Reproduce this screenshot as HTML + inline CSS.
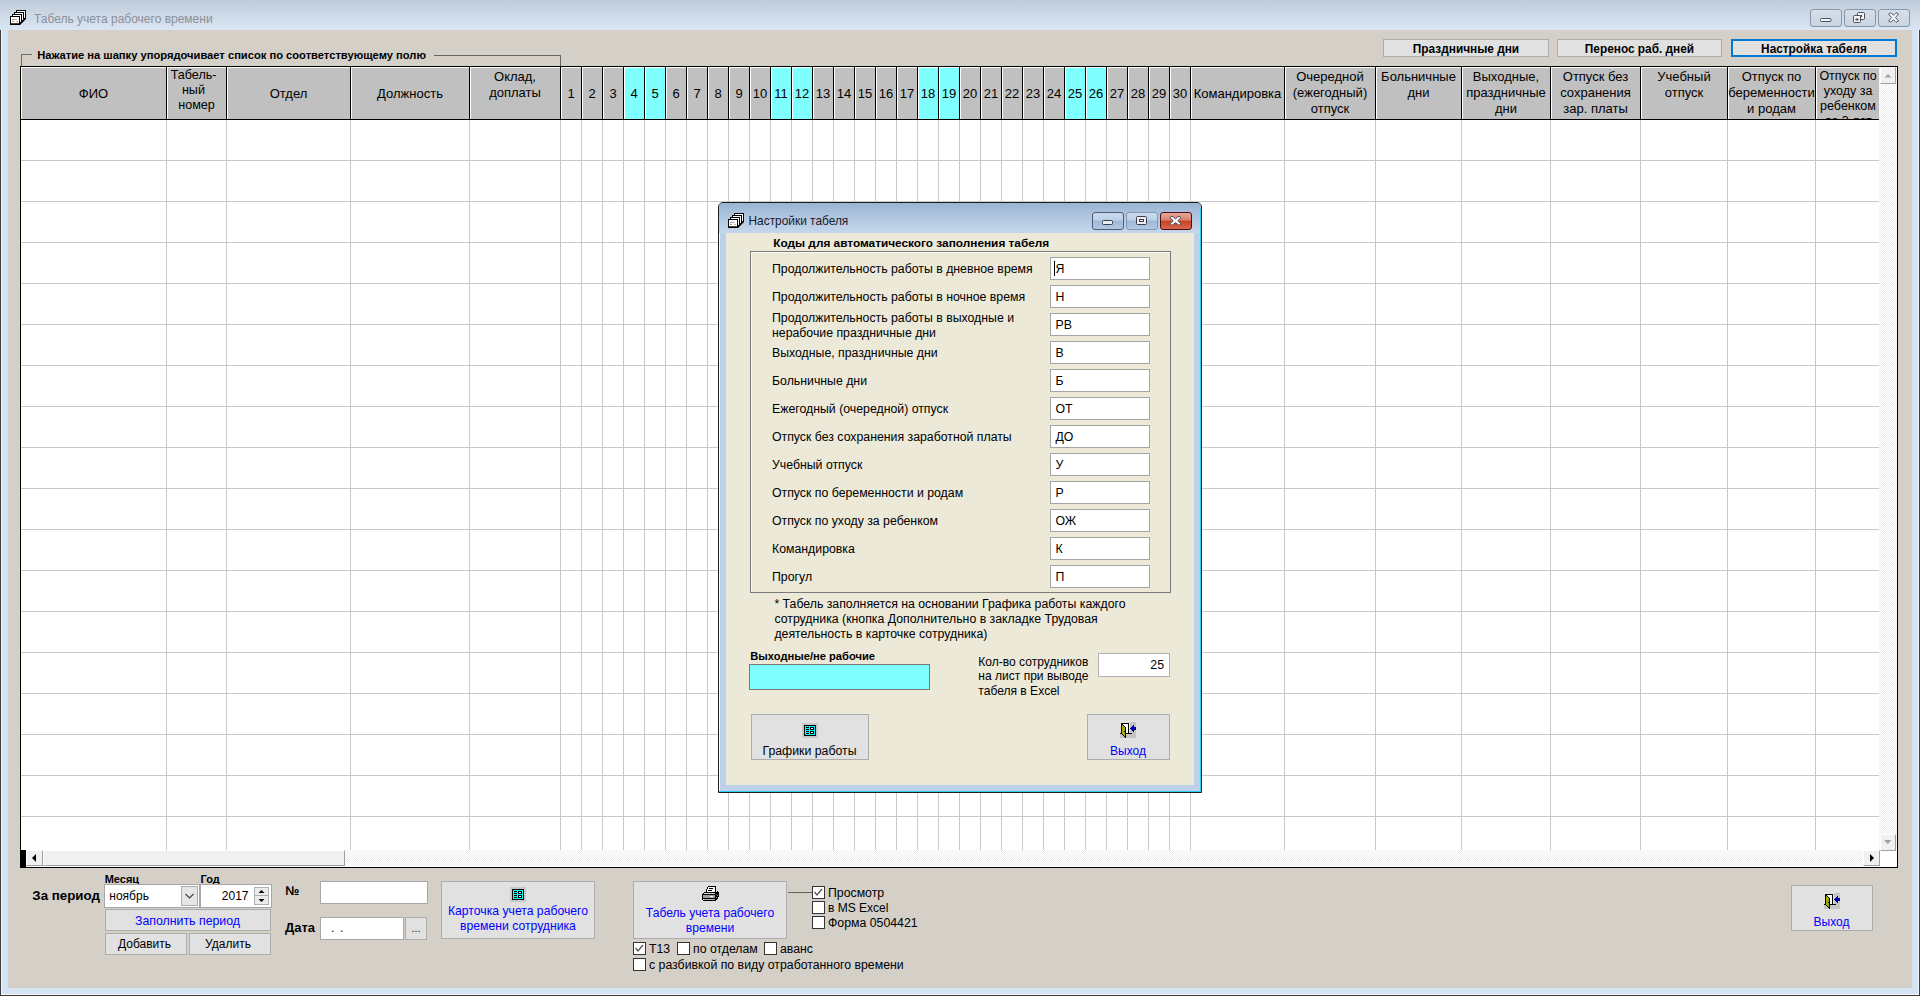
<!DOCTYPE html>
<html><head><meta charset="utf-8">
<style>
*{box-sizing:border-box}
html,body{margin:0;padding:0}
body{width:1920px;height:996px;overflow:hidden;position:relative;font-family:"Liberation Sans",sans-serif;font-size:12px;color:#000;background:#d4e3f2}
.a{position:absolute}
.t{position:absolute;white-space:pre;line-height:1}
</style></head><body>
<div class="a" style="left:0px;top:0px;width:1920px;height:996px;background:#d5e4f2"></div>
<div class="a" style="left:0px;top:30px;width:1920px;height:966px;border:1px solid #3c3c3c;border-top:none"></div>
<div class="a" style="left:1px;top:30px;width:1918px;height:965px;border:1px solid #f4f8fc;border-top:none"></div>
<div class="a" style="left:0px;top:0px;width:1920px;height:30px;background:linear-gradient(#bfcbd9,#dae6f3)"></div>
<div class="a" style="left:8px;top:30px;width:1904px;height:958px;background:#d4d0c8"></div>
<svg class="a" style="left:10px;top:10px" width="17" height="16" viewBox="10 10 17 16"><path d="M16 10h10v9l-6 6H10V16h2v-2h2v-2h2z" fill="#000"/><rect x="16" y="10" width="10" height="9" fill="#000"/><rect x="17" y="11" width="8" height="7" fill="#fff"/><rect x="14" y="12" width="10" height="9" fill="#000"/><rect x="15" y="13" width="8" height="7" fill="#fff"/><rect x="12" y="14" width="10" height="9" fill="#000"/><rect x="13" y="15" width="8" height="7" fill="#fff"/><rect x="10" y="16" width="10" height="9" fill="#000"/><rect x="11" y="17" width="8" height="7" fill="#fff"/><rect x="17" y="11" width="8" height="1" fill="#fff"/><rect x="11" y="17" width="8" height="6" fill="#fff"/><rect x="12" y="19" width="3" height="1" fill="#999"/><rect x="15" y="19" width="2" height="1" fill="#bbb"/><rect x="12" y="21" width="2" height="1" fill="#999"/><rect x="16" y="21" width="2" height="1" fill="#bbb"/><rect x="11" y="23" width="8" height="1" fill="#5a3a1a"/></svg>
<div class="t" style="left:34px;top:12.84px;font-size:12px;color:#8b9099;">Табель учета рабочего времени</div>
<div class="a" style="left:1810px;top:9px;width:32px;height:18px;border:1px solid #8996ab;border-radius:3px;background:linear-gradient(#d6dfea,#c8d4e2)"></div>
<div class="a" style="left:1844px;top:9px;width:32px;height:18px;border:1px solid #8996ab;border-radius:3px;background:linear-gradient(#d6dfea,#c8d4e2)"></div>
<div class="a" style="left:1878px;top:9px;width:32px;height:18px;border:1px solid #8996ab;border-radius:3px;background:linear-gradient(#d6dfea,#c8d4e2)"></div>
<svg class="a" style="left:1810px;top:9px" width="100" height="18" viewBox="0 0 100 18">
<rect x="10.5" y="9.5" width="10.5" height="3" rx="1" fill="#f4f4f4" stroke="#4a5060"/>
<rect x="47.5" y="3.5" width="7" height="7" rx="1" fill="#f4f4f4" stroke="#4a5060"/>
<rect x="50" y="6" width="2" height="2" fill="#4a5060"/>
<rect x="43.5" y="6.5" width="7" height="7" rx="1" fill="#f4f4f4" stroke="#4a5060"/>
<rect x="45.5" y="9.5" width="3" height="2" fill="#4a5060"/>
<path d="M78.5 5l2.5-1.3 2.5 2.6 2.5-2.6 2.5 1.3-3 3.5 3 3.5-2.5 1.3-2.5-2.6-2.5 2.6-2.5-1.3 3-3.5z" fill="#f4f4f4" stroke="#4a5060" stroke-width="0.9"/>
</svg>
<div class="a" style="left:1383px;top:39px;width:166px;height:18px;background:#e1e1e1;border:1px solid #adadad;"></div>
<div class="t" style="left:1266px;width:400px;text-align:center;top:44.17px;font-size:11.85px;font-weight:bold;">Праздничные дни</div>
<div class="a" style="left:1557px;top:39px;width:165px;height:18px;background:#e1e1e1;border:1px solid #adadad;"></div>
<div class="t" style="left:1439.5px;width:400px;text-align:center;top:44.17px;font-size:11.85px;font-weight:bold;">Перенос раб. дней</div>
<div class="a" style="left:1731px;top:39px;width:166px;height:18px;background:#e1e1e1;border:1px solid #0078d7;border-width:2px"></div>
<div class="t" style="left:1614px;width:400px;text-align:center;top:44.17px;font-size:11.85px;font-weight:bold;">Настройка табеля</div>
<div class="a" style="left:21px;top:54px;width:11px;height:1px;background:#6f6f6f"></div>
<div class="a" style="left:21px;top:54px;width:1px;height:12px;background:#6f6f6f"></div>
<div class="a" style="left:434px;top:55px;width:126px;height:1px;background:#666"></div>
<div class="a" style="left:560px;top:55px;width:1px;height:11px;background:#666"></div>
<div class="t" style="left:37.2px;top:50.14px;font-size:11.17px;font-weight:bold;">Нажатие на шапку упорядочивает список по соответствующему полю</div>
<div class="a" style="left:20px;top:66px;width:1878px;height:802px;border:1px solid #000;background:#fff"></div>
<div class="a" style="left:166px;top:120px;width:1px;height:730px;background:#c8c8c8"></div>
<div class="a" style="left:226px;top:120px;width:1px;height:730px;background:#c8c8c8"></div>
<div class="a" style="left:350px;top:120px;width:1px;height:730px;background:#c8c8c8"></div>
<div class="a" style="left:469px;top:120px;width:1px;height:730px;background:#c8c8c8"></div>
<div class="a" style="left:560px;top:120px;width:1px;height:730px;background:#c8c8c8"></div>
<div class="a" style="left:581px;top:120px;width:1px;height:730px;background:#c8c8c8"></div>
<div class="a" style="left:602px;top:120px;width:1px;height:730px;background:#c8c8c8"></div>
<div class="a" style="left:623px;top:120px;width:1px;height:730px;background:#c8c8c8"></div>
<div class="a" style="left:644px;top:120px;width:1px;height:730px;background:#c8c8c8"></div>
<div class="a" style="left:665px;top:120px;width:1px;height:730px;background:#c8c8c8"></div>
<div class="a" style="left:686px;top:120px;width:1px;height:730px;background:#c8c8c8"></div>
<div class="a" style="left:707px;top:120px;width:1px;height:730px;background:#c8c8c8"></div>
<div class="a" style="left:728px;top:120px;width:1px;height:730px;background:#c8c8c8"></div>
<div class="a" style="left:749px;top:120px;width:1px;height:730px;background:#c8c8c8"></div>
<div class="a" style="left:770px;top:120px;width:1px;height:730px;background:#c8c8c8"></div>
<div class="a" style="left:791px;top:120px;width:1px;height:730px;background:#c8c8c8"></div>
<div class="a" style="left:812px;top:120px;width:1px;height:730px;background:#c8c8c8"></div>
<div class="a" style="left:833px;top:120px;width:1px;height:730px;background:#c8c8c8"></div>
<div class="a" style="left:854px;top:120px;width:1px;height:730px;background:#c8c8c8"></div>
<div class="a" style="left:875px;top:120px;width:1px;height:730px;background:#c8c8c8"></div>
<div class="a" style="left:896px;top:120px;width:1px;height:730px;background:#c8c8c8"></div>
<div class="a" style="left:917px;top:120px;width:1px;height:730px;background:#c8c8c8"></div>
<div class="a" style="left:938px;top:120px;width:1px;height:730px;background:#c8c8c8"></div>
<div class="a" style="left:959px;top:120px;width:1px;height:730px;background:#c8c8c8"></div>
<div class="a" style="left:980px;top:120px;width:1px;height:730px;background:#c8c8c8"></div>
<div class="a" style="left:1001px;top:120px;width:1px;height:730px;background:#c8c8c8"></div>
<div class="a" style="left:1022px;top:120px;width:1px;height:730px;background:#c8c8c8"></div>
<div class="a" style="left:1043px;top:120px;width:1px;height:730px;background:#c8c8c8"></div>
<div class="a" style="left:1064px;top:120px;width:1px;height:730px;background:#c8c8c8"></div>
<div class="a" style="left:1085px;top:120px;width:1px;height:730px;background:#c8c8c8"></div>
<div class="a" style="left:1106px;top:120px;width:1px;height:730px;background:#c8c8c8"></div>
<div class="a" style="left:1127px;top:120px;width:1px;height:730px;background:#c8c8c8"></div>
<div class="a" style="left:1148px;top:120px;width:1px;height:730px;background:#c8c8c8"></div>
<div class="a" style="left:1169px;top:120px;width:1px;height:730px;background:#c8c8c8"></div>
<div class="a" style="left:1190px;top:120px;width:1px;height:730px;background:#c8c8c8"></div>
<div class="a" style="left:1284px;top:120px;width:1px;height:730px;background:#c8c8c8"></div>
<div class="a" style="left:1375px;top:120px;width:1px;height:730px;background:#c8c8c8"></div>
<div class="a" style="left:1461px;top:120px;width:1px;height:730px;background:#c8c8c8"></div>
<div class="a" style="left:1550px;top:120px;width:1px;height:730px;background:#c8c8c8"></div>
<div class="a" style="left:1640px;top:120px;width:1px;height:730px;background:#c8c8c8"></div>
<div class="a" style="left:1727px;top:120px;width:1px;height:730px;background:#c8c8c8"></div>
<div class="a" style="left:1815px;top:120px;width:1px;height:730px;background:#c8c8c8"></div>
<div class="a" style="left:21px;top:160px;width:1858px;height:1px;background:#c8c8c8"></div>
<div class="a" style="left:21px;top:201px;width:1858px;height:1px;background:#c8c8c8"></div>
<div class="a" style="left:21px;top:242px;width:1858px;height:1px;background:#c8c8c8"></div>
<div class="a" style="left:21px;top:283px;width:1858px;height:1px;background:#c8c8c8"></div>
<div class="a" style="left:21px;top:324px;width:1858px;height:1px;background:#c8c8c8"></div>
<div class="a" style="left:21px;top:365px;width:1858px;height:1px;background:#c8c8c8"></div>
<div class="a" style="left:21px;top:406px;width:1858px;height:1px;background:#c8c8c8"></div>
<div class="a" style="left:21px;top:447px;width:1858px;height:1px;background:#c8c8c8"></div>
<div class="a" style="left:21px;top:488px;width:1858px;height:1px;background:#c8c8c8"></div>
<div class="a" style="left:21px;top:529px;width:1858px;height:1px;background:#c8c8c8"></div>
<div class="a" style="left:21px;top:570px;width:1858px;height:1px;background:#c8c8c8"></div>
<div class="a" style="left:21px;top:611px;width:1858px;height:1px;background:#c8c8c8"></div>
<div class="a" style="left:21px;top:652px;width:1858px;height:1px;background:#c8c8c8"></div>
<div class="a" style="left:21px;top:693px;width:1858px;height:1px;background:#c8c8c8"></div>
<div class="a" style="left:21px;top:734px;width:1858px;height:1px;background:#c8c8c8"></div>
<div class="a" style="left:21px;top:775px;width:1858px;height:1px;background:#c8c8c8"></div>
<div class="a" style="left:21px;top:816px;width:1858px;height:1px;background:#c8c8c8"></div>
<div class="a" style="left:21px;top:67px;width:145px;height:52px;background:#c0c0c0;border-left:1px solid #fff;border-top:1px solid #fff"></div>
<div class="t" style="left:-106.5px;width:400px;text-align:center;top:86.60px;font-size:13px;">ФИО</div>
<div class="a" style="left:167px;top:67px;width:59px;height:52px;background:#c0c0c0;border-left:1px solid #fff;border-top:1px solid #fff"></div>
<div class="t" style="left:-6.400000000000006px;width:400px;text-align:center;top:69.33px;font-size:12.6px;">Табель-</div>
<div class="t" style="left:-6.599999999999994px;width:400px;text-align:center;top:84.33px;font-size:12.6px;">ный</div>
<div class="t" style="left:-3.5px;width:400px;text-align:center;top:99.33px;font-size:12.6px;">номер</div>
<div class="a" style="left:227px;top:67px;width:123px;height:52px;background:#c0c0c0;border-left:1px solid #fff;border-top:1px solid #fff"></div>
<div class="t" style="left:88.5px;width:400px;text-align:center;top:86.60px;font-size:13px;">Отдел</div>
<div class="a" style="left:351px;top:67px;width:118px;height:52px;background:#c0c0c0;border-left:1px solid #fff;border-top:1px solid #fff"></div>
<div class="t" style="left:210.0px;width:400px;text-align:center;top:86.60px;font-size:13px;">Должность</div>
<div class="a" style="left:470px;top:67px;width:90px;height:52px;background:#c0c0c0;border-left:1px solid #fff;border-top:1px solid #fff"></div>
<div class="t" style="left:315.0px;width:400px;text-align:center;top:69.60px;font-size:13px;">Оклад,</div>
<div class="t" style="left:315.0px;width:400px;text-align:center;top:85.60px;font-size:13px;">доплаты</div>
<div class="a" style="left:561px;top:67px;width:20px;height:52px;background:#c0c0c0;border-left:1px solid #fff;border-top:1px solid #fff"></div>
<div class="t" style="left:371.0px;width:400px;text-align:center;top:86.60px;font-size:13px;">1</div>
<div class="a" style="left:582px;top:67px;width:20px;height:52px;background:#c0c0c0;border-left:1px solid #fff;border-top:1px solid #fff"></div>
<div class="t" style="left:392.0px;width:400px;text-align:center;top:86.60px;font-size:13px;">2</div>
<div class="a" style="left:603px;top:67px;width:20px;height:52px;background:#c0c0c0;border-left:1px solid #fff;border-top:1px solid #fff"></div>
<div class="t" style="left:413.0px;width:400px;text-align:center;top:86.60px;font-size:13px;">3</div>
<div class="a" style="left:624px;top:67px;width:20px;height:52px;background:#80ffff;border-left:1px solid #fff;border-top:1px solid #fff"></div>
<div class="t" style="left:434.0px;width:400px;text-align:center;top:86.60px;font-size:13px;">4</div>
<div class="a" style="left:645px;top:67px;width:20px;height:52px;background:#80ffff;border-left:1px solid #fff;border-top:1px solid #fff"></div>
<div class="t" style="left:455.0px;width:400px;text-align:center;top:86.60px;font-size:13px;">5</div>
<div class="a" style="left:666px;top:67px;width:20px;height:52px;background:#c0c0c0;border-left:1px solid #fff;border-top:1px solid #fff"></div>
<div class="t" style="left:476.0px;width:400px;text-align:center;top:86.60px;font-size:13px;">6</div>
<div class="a" style="left:687px;top:67px;width:20px;height:52px;background:#c0c0c0;border-left:1px solid #fff;border-top:1px solid #fff"></div>
<div class="t" style="left:497.0px;width:400px;text-align:center;top:86.60px;font-size:13px;">7</div>
<div class="a" style="left:708px;top:67px;width:20px;height:52px;background:#c0c0c0;border-left:1px solid #fff;border-top:1px solid #fff"></div>
<div class="t" style="left:518.0px;width:400px;text-align:center;top:86.60px;font-size:13px;">8</div>
<div class="a" style="left:729px;top:67px;width:20px;height:52px;background:#c0c0c0;border-left:1px solid #fff;border-top:1px solid #fff"></div>
<div class="t" style="left:539.0px;width:400px;text-align:center;top:86.60px;font-size:13px;">9</div>
<div class="a" style="left:750px;top:67px;width:20px;height:52px;background:#c0c0c0;border-left:1px solid #fff;border-top:1px solid #fff"></div>
<div class="t" style="left:560.0px;width:400px;text-align:center;top:86.60px;font-size:13px;">10</div>
<div class="a" style="left:771px;top:67px;width:20px;height:52px;background:#80ffff;border-left:1px solid #fff;border-top:1px solid #fff"></div>
<div class="t" style="left:581.0px;width:400px;text-align:center;top:86.60px;font-size:13px;">11</div>
<div class="a" style="left:792px;top:67px;width:20px;height:52px;background:#80ffff;border-left:1px solid #fff;border-top:1px solid #fff"></div>
<div class="t" style="left:602.0px;width:400px;text-align:center;top:86.60px;font-size:13px;">12</div>
<div class="a" style="left:813px;top:67px;width:20px;height:52px;background:#c0c0c0;border-left:1px solid #fff;border-top:1px solid #fff"></div>
<div class="t" style="left:623.0px;width:400px;text-align:center;top:86.60px;font-size:13px;">13</div>
<div class="a" style="left:834px;top:67px;width:20px;height:52px;background:#c0c0c0;border-left:1px solid #fff;border-top:1px solid #fff"></div>
<div class="t" style="left:644.0px;width:400px;text-align:center;top:86.60px;font-size:13px;">14</div>
<div class="a" style="left:855px;top:67px;width:20px;height:52px;background:#c0c0c0;border-left:1px solid #fff;border-top:1px solid #fff"></div>
<div class="t" style="left:665.0px;width:400px;text-align:center;top:86.60px;font-size:13px;">15</div>
<div class="a" style="left:876px;top:67px;width:20px;height:52px;background:#c0c0c0;border-left:1px solid #fff;border-top:1px solid #fff"></div>
<div class="t" style="left:686.0px;width:400px;text-align:center;top:86.60px;font-size:13px;">16</div>
<div class="a" style="left:897px;top:67px;width:20px;height:52px;background:#c0c0c0;border-left:1px solid #fff;border-top:1px solid #fff"></div>
<div class="t" style="left:707.0px;width:400px;text-align:center;top:86.60px;font-size:13px;">17</div>
<div class="a" style="left:918px;top:67px;width:20px;height:52px;background:#80ffff;border-left:1px solid #fff;border-top:1px solid #fff"></div>
<div class="t" style="left:728.0px;width:400px;text-align:center;top:86.60px;font-size:13px;">18</div>
<div class="a" style="left:939px;top:67px;width:20px;height:52px;background:#80ffff;border-left:1px solid #fff;border-top:1px solid #fff"></div>
<div class="t" style="left:749.0px;width:400px;text-align:center;top:86.60px;font-size:13px;">19</div>
<div class="a" style="left:960px;top:67px;width:20px;height:52px;background:#c0c0c0;border-left:1px solid #fff;border-top:1px solid #fff"></div>
<div class="t" style="left:770.0px;width:400px;text-align:center;top:86.60px;font-size:13px;">20</div>
<div class="a" style="left:981px;top:67px;width:20px;height:52px;background:#c0c0c0;border-left:1px solid #fff;border-top:1px solid #fff"></div>
<div class="t" style="left:791.0px;width:400px;text-align:center;top:86.60px;font-size:13px;">21</div>
<div class="a" style="left:1002px;top:67px;width:20px;height:52px;background:#c0c0c0;border-left:1px solid #fff;border-top:1px solid #fff"></div>
<div class="t" style="left:812.0px;width:400px;text-align:center;top:86.60px;font-size:13px;">22</div>
<div class="a" style="left:1023px;top:67px;width:20px;height:52px;background:#c0c0c0;border-left:1px solid #fff;border-top:1px solid #fff"></div>
<div class="t" style="left:833.0px;width:400px;text-align:center;top:86.60px;font-size:13px;">23</div>
<div class="a" style="left:1044px;top:67px;width:20px;height:52px;background:#c0c0c0;border-left:1px solid #fff;border-top:1px solid #fff"></div>
<div class="t" style="left:854.0px;width:400px;text-align:center;top:86.60px;font-size:13px;">24</div>
<div class="a" style="left:1065px;top:67px;width:20px;height:52px;background:#80ffff;border-left:1px solid #fff;border-top:1px solid #fff"></div>
<div class="t" style="left:875.0px;width:400px;text-align:center;top:86.60px;font-size:13px;">25</div>
<div class="a" style="left:1086px;top:67px;width:20px;height:52px;background:#80ffff;border-left:1px solid #fff;border-top:1px solid #fff"></div>
<div class="t" style="left:896.0px;width:400px;text-align:center;top:86.60px;font-size:13px;">26</div>
<div class="a" style="left:1107px;top:67px;width:20px;height:52px;background:#c0c0c0;border-left:1px solid #fff;border-top:1px solid #fff"></div>
<div class="t" style="left:917.0px;width:400px;text-align:center;top:86.60px;font-size:13px;">27</div>
<div class="a" style="left:1128px;top:67px;width:20px;height:52px;background:#c0c0c0;border-left:1px solid #fff;border-top:1px solid #fff"></div>
<div class="t" style="left:938.0px;width:400px;text-align:center;top:86.60px;font-size:13px;">28</div>
<div class="a" style="left:1149px;top:67px;width:20px;height:52px;background:#c0c0c0;border-left:1px solid #fff;border-top:1px solid #fff"></div>
<div class="t" style="left:959.0px;width:400px;text-align:center;top:86.60px;font-size:13px;">29</div>
<div class="a" style="left:1170px;top:67px;width:20px;height:52px;background:#c0c0c0;border-left:1px solid #fff;border-top:1px solid #fff"></div>
<div class="t" style="left:980.0px;width:400px;text-align:center;top:86.60px;font-size:13px;">30</div>
<div class="a" style="left:1191px;top:67px;width:93px;height:52px;background:#c0c0c0;border-left:1px solid #fff;border-top:1px solid #fff"></div>
<div class="t" style="left:1037.5px;width:400px;text-align:center;top:86.60px;font-size:13px;">Командировка</div>
<div class="a" style="left:1285px;top:67px;width:90px;height:52px;background:#c0c0c0;border-left:1px solid #fff;border-top:1px solid #fff"></div>
<div class="t" style="left:1130.0px;width:400px;text-align:center;top:69.60px;font-size:13px;">Очередной</div>
<div class="t" style="left:1130.0px;width:400px;text-align:center;top:85.60px;font-size:13px;">(ежегодный)</div>
<div class="t" style="left:1130.0px;width:400px;text-align:center;top:101.60px;font-size:13px;">отпуск</div>
<div class="a" style="left:1376px;top:67px;width:85px;height:52px;background:#c0c0c0;border-left:1px solid #fff;border-top:1px solid #fff"></div>
<div class="t" style="left:1218.5px;width:400px;text-align:center;top:69.60px;font-size:13px;">Больничные</div>
<div class="t" style="left:1218.5px;width:400px;text-align:center;top:85.60px;font-size:13px;">дни</div>
<div class="a" style="left:1462px;top:67px;width:88px;height:52px;background:#c0c0c0;border-left:1px solid #fff;border-top:1px solid #fff"></div>
<div class="t" style="left:1306.0px;width:400px;text-align:center;top:69.60px;font-size:13px;">Выходные,</div>
<div class="t" style="left:1306.0px;width:400px;text-align:center;top:85.60px;font-size:13px;">праздничные</div>
<div class="t" style="left:1306.0px;width:400px;text-align:center;top:101.60px;font-size:13px;">дни</div>
<div class="a" style="left:1551px;top:67px;width:89px;height:52px;background:#c0c0c0;border-left:1px solid #fff;border-top:1px solid #fff"></div>
<div class="t" style="left:1395.5px;width:400px;text-align:center;top:69.60px;font-size:13px;">Отпуск без</div>
<div class="t" style="left:1395.5px;width:400px;text-align:center;top:85.60px;font-size:13px;">сохранения</div>
<div class="t" style="left:1395.5px;width:400px;text-align:center;top:101.60px;font-size:13px;">зар. платы</div>
<div class="a" style="left:1641px;top:67px;width:86px;height:52px;background:#c0c0c0;border-left:1px solid #fff;border-top:1px solid #fff"></div>
<div class="t" style="left:1484.0px;width:400px;text-align:center;top:69.60px;font-size:13px;">Учебный</div>
<div class="t" style="left:1484.0px;width:400px;text-align:center;top:85.60px;font-size:13px;">отпуск</div>
<div class="a" style="left:1728px;top:67px;width:87px;height:52px;background:#c0c0c0;border-left:1px solid #fff;border-top:1px solid #fff"></div>
<div class="t" style="left:1571.5px;width:400px;text-align:center;top:69.60px;font-size:13px;">Отпуск по</div>
<div class="t" style="left:1571.5px;width:400px;text-align:center;top:85.60px;font-size:13px;">беременности</div>
<div class="t" style="left:1571.5px;width:400px;text-align:center;top:101.60px;font-size:13px;">и родам</div>
<div class="a" style="left:1816px;top:67px;width:63px;height:52px;overflow:hidden;background:#c0c0c0;border-left:1px solid #fff;border-top:1px solid #fff">
<div class="t" style="left:-200px;width:462px;text-align:center;top:2.42px;font-size:12.5px">Отпуск по</div>
<div class="t" style="left:-200px;width:462px;text-align:center;top:17.42px;font-size:12.5px">уходу за</div>
<div class="t" style="left:-200px;width:462px;text-align:center;top:32.42px;font-size:12.5px">ребенком</div>
<div class="t" style="left:-200px;width:462px;text-align:center;top:47.42px;font-size:12.5px">до 3 лет</div>
</div>
<div class="a" style="left:166px;top:67px;width:1px;height:52px;background:#000"></div>
<div class="a" style="left:226px;top:67px;width:1px;height:52px;background:#000"></div>
<div class="a" style="left:350px;top:67px;width:1px;height:52px;background:#000"></div>
<div class="a" style="left:469px;top:67px;width:1px;height:52px;background:#000"></div>
<div class="a" style="left:560px;top:67px;width:1px;height:52px;background:#000"></div>
<div class="a" style="left:581px;top:67px;width:1px;height:52px;background:#000"></div>
<div class="a" style="left:602px;top:67px;width:1px;height:52px;background:#000"></div>
<div class="a" style="left:623px;top:67px;width:1px;height:52px;background:#000"></div>
<div class="a" style="left:644px;top:67px;width:1px;height:52px;background:#000"></div>
<div class="a" style="left:665px;top:67px;width:1px;height:52px;background:#000"></div>
<div class="a" style="left:686px;top:67px;width:1px;height:52px;background:#000"></div>
<div class="a" style="left:707px;top:67px;width:1px;height:52px;background:#000"></div>
<div class="a" style="left:728px;top:67px;width:1px;height:52px;background:#000"></div>
<div class="a" style="left:749px;top:67px;width:1px;height:52px;background:#000"></div>
<div class="a" style="left:770px;top:67px;width:1px;height:52px;background:#000"></div>
<div class="a" style="left:791px;top:67px;width:1px;height:52px;background:#000"></div>
<div class="a" style="left:812px;top:67px;width:1px;height:52px;background:#000"></div>
<div class="a" style="left:833px;top:67px;width:1px;height:52px;background:#000"></div>
<div class="a" style="left:854px;top:67px;width:1px;height:52px;background:#000"></div>
<div class="a" style="left:875px;top:67px;width:1px;height:52px;background:#000"></div>
<div class="a" style="left:896px;top:67px;width:1px;height:52px;background:#000"></div>
<div class="a" style="left:917px;top:67px;width:1px;height:52px;background:#000"></div>
<div class="a" style="left:938px;top:67px;width:1px;height:52px;background:#000"></div>
<div class="a" style="left:959px;top:67px;width:1px;height:52px;background:#000"></div>
<div class="a" style="left:980px;top:67px;width:1px;height:52px;background:#000"></div>
<div class="a" style="left:1001px;top:67px;width:1px;height:52px;background:#000"></div>
<div class="a" style="left:1022px;top:67px;width:1px;height:52px;background:#000"></div>
<div class="a" style="left:1043px;top:67px;width:1px;height:52px;background:#000"></div>
<div class="a" style="left:1064px;top:67px;width:1px;height:52px;background:#000"></div>
<div class="a" style="left:1085px;top:67px;width:1px;height:52px;background:#000"></div>
<div class="a" style="left:1106px;top:67px;width:1px;height:52px;background:#000"></div>
<div class="a" style="left:1127px;top:67px;width:1px;height:52px;background:#000"></div>
<div class="a" style="left:1148px;top:67px;width:1px;height:52px;background:#000"></div>
<div class="a" style="left:1169px;top:67px;width:1px;height:52px;background:#000"></div>
<div class="a" style="left:1190px;top:67px;width:1px;height:52px;background:#000"></div>
<div class="a" style="left:1284px;top:67px;width:1px;height:52px;background:#000"></div>
<div class="a" style="left:1375px;top:67px;width:1px;height:52px;background:#000"></div>
<div class="a" style="left:1461px;top:67px;width:1px;height:52px;background:#000"></div>
<div class="a" style="left:1550px;top:67px;width:1px;height:52px;background:#000"></div>
<div class="a" style="left:1640px;top:67px;width:1px;height:52px;background:#000"></div>
<div class="a" style="left:1727px;top:67px;width:1px;height:52px;background:#000"></div>
<div class="a" style="left:1815px;top:67px;width:1px;height:52px;background:#000"></div>
<div class="a" style="left:1879px;top:67px;width:1px;height:53px;background:#000"></div>
<div class="a" style="left:21px;top:119px;width:1859px;height:1px;background:#000"></div>
<div class="a" style="left:1879px;top:67px;width:18px;height:783px;background-color:#fff;background-image:repeating-conic-gradient(#efefef 0 25%,#fff 0 50%);background-size:2px 2px"></div>
<div class="a" style="left:1880px;top:67px;width:16px;height:17px;background:#f0f0f0;border-right:1px solid #a0a0a0;border-bottom:1px solid #a0a0a0;border-left:1px solid #fff;border-top:1px solid #fff"></div>
<svg class="a" style="left:1880px;top:67px" width="16" height="17"><path d="M4.5 10.5h7l-3.5-3.5z" fill="#a0a0a0"/></svg>
<div class="a" style="left:1880px;top:834px;width:16px;height:17px;background:#f0f0f0;border-right:1px solid #a0a0a0;border-bottom:1px solid #a0a0a0;border-left:1px solid #fff;border-top:1px solid #fff"></div>
<svg class="a" style="left:1880px;top:834px" width="16" height="17"><path d="M4 6h7.5l-3.75 4z" fill="#a0a0a0"/></svg>
<div class="a" style="left:21px;top:850px;width:1858px;height:16px;background-color:#fff;background-image:repeating-conic-gradient(#efefef 0 25%,#fff 0 50%);background-size:2px 2px"></div>
<div class="a" style="left:21px;top:850px;width:5px;height:17px;background:#000"></div>
<div class="a" style="left:26px;top:850px;width:17px;height:16px;background:#f0f0f0;border-right:1px solid #a0a0a0;border-bottom:1px solid #a0a0a0;border-left:1px solid #fff;border-top:1px solid #fff"></div>
<svg class="a" style="left:26px;top:850px" width="17" height="16"><path d="M10 4v8l-4-4z" fill="#000"/></svg>
<div class="a" style="left:43px;top:850px;width:302px;height:16px;background:#f0f0f0;border-right:1px solid #a0a0a0;border-bottom:1px solid #a0a0a0;border-left:1px solid #fff;border-top:1px solid #fff"></div>
<div class="a" style="left:1863px;top:850px;width:17px;height:16px;background:#f0f0f0;border-right:1px solid #a0a0a0;border-bottom:1px solid #a0a0a0;border-left:1px solid #fff;border-top:1px solid #fff"></div>
<svg class="a" style="left:1863px;top:850px" width="17" height="16"><path d="M7 4v8l4-4z" fill="#000"/></svg>
<div class="a" style="left:1880px;top:851px;width:17px;height:15px;background:#fff"></div>
<div class="t" style="left:32.3px;top:889.24px;font-size:13.3px;font-weight:bold;">За период</div>
<div class="t" style="left:104.7px;top:873.69px;font-size:11px;font-weight:bold;">Месяц</div>
<div class="t" style="left:200.6px;top:873.69px;font-size:11px;font-weight:bold;">Год</div>
<div class="a" style="left:104px;top:884px;width:96px;height:24px;background:#fff;border:1px solid #a8a8a8"></div>
<div class="a" style="left:181px;top:886px;width:17px;height:20px;background:#e6e6e6;border:1px solid #acacac"></div>
<svg class="a" style="left:181px;top:886px" width="17" height="20"><path d="M4.5 8l4 4 4-4" fill="none" stroke="#444" stroke-width="1.2"/></svg>
<div class="t" style="left:109.3px;top:889.84px;font-size:12px;">ноябрь</div>
<div class="a" style="left:200px;top:884px;width:72px;height:24px;background:#fff;border:1px solid #a8a8a8"></div>
<div class="t" style="left:-151.5px;width:400px;text-align:right;top:889.84px;font-size:12px;">2017</div>
<div class="a" style="left:254px;top:887px;width:15px;height:9px;background:#ececec;border:1px solid #b0b0b0"></div>
<div class="a" style="left:254px;top:895px;width:15px;height:10px;background:#ececec;border:1px solid #b0b0b0"></div>
<svg class="a" style="left:254px;top:887px" width="15" height="18"><path d="M4.5 6h6l-3-3z M4.5 12h6l-3 3z" fill="#000"/></svg>
<div class="a" style="left:105px;top:909px;width:166px;height:22px;background:#e1e1e1;border:1px solid #adadad;"></div>
<div class="t" style="left:-12.5px;width:400px;text-align:center;top:914.65px;font-size:12.35px;color:#0000ff;">Заполнить период</div>
<div class="a" style="left:105px;top:933px;width:82px;height:22px;background:#e1e1e1;border:1px solid #adadad;"></div>
<div class="t" style="left:-55.5px;width:400px;text-align:center;top:938.24px;font-size:12px;">Добавить</div>
<div class="a" style="left:189px;top:933px;width:82px;height:22px;background:#e1e1e1;border:1px solid #adadad;"></div>
<div class="t" style="left:28px;width:400px;text-align:center;top:938.24px;font-size:12px;">Удалить</div>
<div class="t" style="left:285.3px;top:885.33px;font-size:12.6px;font-weight:bold;">№</div>
<div class="a" style="left:320px;top:881px;width:108px;height:23px;background:#fff;border:1px solid #a8a8a8"></div>
<div class="t" style="left:285px;top:920.60px;font-size:13px;font-weight:bold;">Дата</div>
<div class="a" style="left:320px;top:917px;width:84px;height:23px;background:#fff;border:1px solid #a8a8a8"></div>
<div class="t" style="left:331px;top:921.84px;font-size:12px;">.</div>
<div class="t" style="left:340px;top:921.84px;font-size:12px;">.</div>
<div class="a" style="left:405px;top:917px;width:22px;height:23px;background:#e1e1e1;border:1px solid #adadad;"></div>
<div class="t" style="left:216px;width:400px;text-align:center;top:923.11px;font-size:10.5px;">...</div>
<div class="a" style="left:441px;top:881px;width:154px;height:58px;background:#e1e1e1;border:1px solid #adadad;"></div>
<svg class="a" style="left:510px;top:887px" width="16" height="15" viewBox="0 0 16 15">
<rect x="0" y="0" width="16" height="15" fill="#c8c8c8"/>
<rect x="2" y="2" width="12" height="11" fill="#000"/>
<rect x="3" y="3" width="10" height="9" fill="#00ffff"/>
<path d="M4 4.5h3M4 6.5h3M4 8.5h3M4 10.5h3" stroke="#000" stroke-width="1"/>
<rect x="8" y="4" width="4" height="3" fill="#000"/><rect x="9" y="5" width="2" height="1" fill="#fff"/>
<rect x="8" y="8" width="4" height="3" fill="#000"/><rect x="9" y="9" width="2" height="1" fill="#fff"/>
</svg>
<div class="t" style="left:318px;width:400px;text-align:center;top:904.67px;font-size:12.2px;color:#0000ff;">Карточка учета рабочего</div>
<div class="t" style="left:318px;width:400px;text-align:center;top:919.67px;font-size:12.2px;color:#0000ff;">времени сотрудника</div>
<div class="a" style="left:633px;top:881px;width:154px;height:58px;background:#e1e1e1;border:1px solid #adadad;"></div>
<svg class="a" style="left:700px;top:884px" width="20" height="18" shape-rendering="crispEdges"><rect x="8" y="2" width="8" height="1" fill="#000"/><rect x="15" y="2" width="1" height="6" fill="#000"/><rect x="7" y="3" width="1" height="2" fill="#000"/><rect x="6" y="5" width="1" height="3" fill="#000"/><rect x="8" y="3" width="7" height="2" fill="#fff"/><rect x="7" y="5" width="8" height="3" fill="#fff"/><rect x="9" y="4" width="4" height="1" fill="#000"/><rect x="8" y="6" width="4" height="1" fill="#000"/><rect x="4" y="8" width="12" height="1" fill="#000"/><rect x="3" y="9" width="1" height="1" fill="#000"/><rect x="2" y="10" width="1" height="6" fill="#000"/><rect x="3" y="16" width="1" height="1" fill="#000"/><rect x="4" y="9" width="11" height="1" fill="#d8d8d8"/><rect x="3" y="10" width="13" height="1" fill="#000"/><rect x="3" y="11" width="12" height="3" fill="#a0a0a0"/><rect x="10" y="12" width="3" height="1" fill="#fff"/><rect x="3" y="14" width="13" height="1" fill="#000"/><rect x="4" y="15" width="11" height="1" fill="#b0b0b0"/><rect x="4" y="16" width="12" height="1" fill="#000"/><rect x="15" y="9" width="1" height="8" fill="#000"/><rect x="16" y="8" width="1" height="8" fill="#000"/><rect x="17" y="7" width="1" height="8" fill="#000"/><rect x="18" y="8" width="1" height="5" fill="#000"/><rect x="16" y="10" width="1" height="1" fill="#888"/><rect x="17" y="11" width="1" height="1" fill="#888"/><rect x="16" y="13" width="1" height="1" fill="#888"/></svg>
<div class="t" style="left:510px;width:400px;text-align:center;top:906.76px;font-size:12.1px;color:#0000ff;">Табель учета рабочего</div>
<div class="t" style="left:510px;width:400px;text-align:center;top:921.76px;font-size:12.1px;color:#0000ff;">времени</div>
<div class="a" style="left:788px;top:892px;width:24px;height:1px;background:#646464"></div>
<div class="a" style="left:812px;top:886px;width:13px;height:13px;background:#fff;border:1px solid #333"></div>
<svg class="a" style="left:812px;top:886px" width="13" height="13"><path d="M2.5 6l2.5 3 5-6" fill="none" stroke="#555" stroke-width="1.3"/></svg>
<div class="t" style="left:828px;top:886.59px;font-size:12.3px;">Просмотр</div>
<div class="a" style="left:812px;top:901px;width:13px;height:13px;background:#fff;border:1px solid #333"></div>
<div class="t" style="left:828px;top:901.84px;font-size:12px;">в MS Excel</div>
<div class="a" style="left:812px;top:916px;width:13px;height:13px;background:#fff;border:1px solid #333"></div>
<div class="t" style="left:828px;top:916.59px;font-size:12.3px;">Форма 0504421</div>
<div class="a" style="left:633px;top:942px;width:13px;height:13px;background:#fff;border:1px solid #333"></div>
<svg class="a" style="left:633px;top:942px" width="13" height="13"><path d="M2.5 6l2.5 3 5-6" fill="none" stroke="#555" stroke-width="1.3"/></svg>
<div class="t" style="left:649px;top:942.59px;font-size:12.3px;">T13</div>
<div class="a" style="left:677px;top:942px;width:13px;height:13px;background:#fff;border:1px solid #333"></div>
<div class="t" style="left:693px;top:942.59px;font-size:12.3px;">по отделам</div>
<div class="a" style="left:764px;top:942px;width:13px;height:13px;background:#fff;border:1px solid #333"></div>
<div class="t" style="left:780px;top:942.59px;font-size:12.3px;">аванс</div>
<div class="a" style="left:633px;top:958px;width:13px;height:13px;background:#fff;border:1px solid #333"></div>
<div class="t" style="left:649px;top:958.59px;font-size:12.3px;">с разбивкой по виду отработанного времени</div>
<div class="a" style="left:1791px;top:885px;width:82px;height:46px;background:#e1e1e1;border:1px solid #adadad;"></div>
<svg class="a" style="left:1824px;top:893px" width="16" height="16" shape-rendering="crispEdges"><rect x="0" y="0" width="16" height="16" fill="#c4c4c4"/><rect x="0" y="0" width="10" height="11" fill="#e4e4e4"/><rect x="1" y="1" width="8" height="1" fill="#000"/><rect x="1" y="1" width="1" height="11" fill="#000"/><rect x="8" y="1" width="1" height="11" fill="#000"/><rect x="0" y="11" width="12" height="1" fill="#000"/><rect x="2" y="2" width="6" height="9" fill="#fff"/><rect x="2" y="2" width="1" height="1" fill="#000"/><rect x="3" y="3" width="1" height="1" fill="#000"/><rect x="4" y="4" width="1" height="1" fill="#000"/><rect x="5" y="5" width="1" height="1" fill="#000"/><rect x="2" y="3" width="1" height="9" fill="#a8a800"/><rect x="3" y="4" width="1" height="9" fill="#a8a800"/><rect x="4" y="5" width="1" height="9" fill="#a8a800"/><rect x="5" y="5" width="1" height="11" fill="#000"/><rect x="2" y="12" width="1" height="1" fill="#000"/><rect x="3" y="13" width="1" height="1" fill="#000"/><rect x="4" y="14" width="1" height="1" fill="#000"/><rect x="2" y="3" width="1" height="1" fill="#a8a800"/><rect x="4" y="9" width="1" height="1" fill="#000"/><rect x="10" y="6" width="1" height="1" fill="#0000a8"/><rect x="11" y="5" width="1" height="3" fill="#0000a8"/><rect x="12" y="4" width="1" height="5" fill="#0000a8"/><rect x="13" y="3" width="1" height="7" fill="#0000a8"/><rect x="14" y="5" width="2" height="3" fill="#0000a8"/></svg>
<div class="t" style="left:1631.5px;width:400px;text-align:center;top:916.14px;font-size:12px;color:#0000ff;">Выход</div>
<div class="a" style="left:718px;top:202px;width:484px;height:591px;border:1px solid #1e1e1e;border-radius:5px 5px 0 0;background:#bcd2ea"></div>
<div class="a" style="left:719px;top:203px;width:482px;height:30px;border-radius:4px 4px 0 0;background:linear-gradient(#9ab4d2,#b6cbe4 60%,#c4d6ec)"></div>
<div class="a" style="left:1200px;top:208px;width:1px;height:584px;background:#2ad0f0"></div>
<div class="a" style="left:719px;top:791px;width:482px;height:1px;background:#2ad0f0"></div>
<div class="a" style="left:719px;top:233px;width:1px;height:558px;background:#fafcff"></div>
<div class="a" style="left:726px;top:233px;width:468px;height:552px;background:#ece9d8"></div>
<svg class="a" style="left:728px;top:213px" width="17" height="16" viewBox="10 10 17 16"><path d="M16 10h10v9l-6 6H10V16h2v-2h2v-2h2z" fill="#000"/><rect x="16" y="10" width="10" height="9" fill="#000"/><rect x="17" y="11" width="8" height="7" fill="#fff"/><rect x="14" y="12" width="10" height="9" fill="#000"/><rect x="15" y="13" width="8" height="7" fill="#fff"/><rect x="12" y="14" width="10" height="9" fill="#000"/><rect x="13" y="15" width="8" height="7" fill="#fff"/><rect x="10" y="16" width="10" height="9" fill="#000"/><rect x="11" y="17" width="8" height="7" fill="#fff"/><rect x="17" y="11" width="8" height="1" fill="#fff"/><rect x="11" y="17" width="8" height="6" fill="#fff"/><rect x="12" y="19" width="3" height="1" fill="#999"/><rect x="15" y="19" width="2" height="1" fill="#bbb"/><rect x="12" y="21" width="2" height="1" fill="#999"/><rect x="16" y="21" width="2" height="1" fill="#bbb"/><rect x="11" y="23" width="8" height="1" fill="#5a3a1a"/></svg>
<div class="t" style="left:748.5px;top:215.93px;font-size:11.9px;color:#1a1a2a;">Настройки табеля</div>
<div class="a" style="left:1092px;top:212px;width:32px;height:18px;border:1px solid #505a70;border-radius:3px;background:linear-gradient(#c8daee 0,#bcd0e8 45%,#9fb8d6 50%,#b0c8e4)"></div>
<div class="a" style="left:1126px;top:212px;width:32px;height:18px;border:1px solid #8696b0;border-radius:3px;background:linear-gradient(#c8daee 0,#bcd0e8 45%,#9fb8d6 50%,#b0c8e4)"></div>
<div class="a" style="left:1160px;top:212px;width:32px;height:18px;border:1px solid #4a1018;border-radius:3px;background:linear-gradient(#e8a898 0,#d88070 45%,#c84020 50%,#d86850)"></div>
<svg class="a" style="left:1092px;top:212px" width="100" height="18" viewBox="0 0 100 18">
<rect x="10.5" y="8.5" width="10" height="4" rx="1" fill="#eee" stroke="#3a4050"/>
<rect x="44.5" y="4.5" width="10" height="8" rx="1" fill="#eee" stroke="#3a4050"/>
<rect x="47" y="7" width="5" height="3" fill="#3a4050"/><rect x="48" y="8" width="3" height="1" fill="#eee"/>
<path d="M80 4l3.5 2.8 3.5-2.8 2 1.8-3.2 2.9 3.2 2.9-2 1.8-3.5-2.8-3.5 2.8-2-1.8 3.2-2.9-3.2-2.9z" fill="#fff" stroke="#3a3a4a" stroke-width="0.9"/>
</svg>
<div class="t" style="left:773.2px;top:237.99px;font-size:11.83px;font-weight:bold;">Коды для автоматического заполнения табеля</div>
<div class="a" style="left:750px;top:251px;width:421px;height:342px;border:1px solid #7a7a7a"></div>
<div class="a" style="left:751px;top:252px;width:419px;height:340px;border-left:1px solid #fafaf4;border-top:1px solid #fafaf4"></div>
<div class="a" style="left:1050px;top:257px;width:100px;height:23px;background:#fff;border:1px solid #a5a5a5"></div>
<div class="t" style="left:1055.5px;top:262.59px;font-size:12.3px;">Я</div>
<div class="t" style="left:772px;top:263.49px;font-size:12.3px;">Продолжительность работы в дневное время</div>
<div class="a" style="left:1050px;top:285px;width:100px;height:23px;background:#fff;border:1px solid #a5a5a5"></div>
<div class="t" style="left:1055.5px;top:290.59px;font-size:12.3px;">Н</div>
<div class="t" style="left:772px;top:291.49px;font-size:12.3px;">Продолжительность работы в ночное время</div>
<div class="a" style="left:1050px;top:313px;width:100px;height:23px;background:#fff;border:1px solid #a5a5a5"></div>
<div class="t" style="left:1055.5px;top:318.59px;font-size:12.3px;">РВ</div>
<div class="t" style="left:772px;top:312.19px;font-size:12.3px;">Продолжительность работы в выходные и</div>
<div class="t" style="left:772px;top:327.09px;font-size:12.3px;">нерабочие праздничные дни</div>
<div class="a" style="left:1050px;top:341px;width:100px;height:23px;background:#fff;border:1px solid #a5a5a5"></div>
<div class="t" style="left:1055.5px;top:346.59px;font-size:12.3px;">В</div>
<div class="t" style="left:772px;top:347.49px;font-size:12.3px;">Выходные, праздничные дни</div>
<div class="a" style="left:1050px;top:369px;width:100px;height:23px;background:#fff;border:1px solid #a5a5a5"></div>
<div class="t" style="left:1055.5px;top:374.59px;font-size:12.3px;">Б</div>
<div class="t" style="left:772px;top:375.49px;font-size:12.3px;">Больничные дни</div>
<div class="a" style="left:1050px;top:397px;width:100px;height:23px;background:#fff;border:1px solid #a5a5a5"></div>
<div class="t" style="left:1055.5px;top:402.59px;font-size:12.3px;">ОТ</div>
<div class="t" style="left:772px;top:403.49px;font-size:12.3px;">Ежегодный (очередной) отпуск</div>
<div class="a" style="left:1050px;top:425px;width:100px;height:23px;background:#fff;border:1px solid #a5a5a5"></div>
<div class="t" style="left:1055.5px;top:430.59px;font-size:12.3px;">ДО</div>
<div class="t" style="left:772px;top:431.49px;font-size:12.3px;">Отпуск без сохранения заработной платы</div>
<div class="a" style="left:1050px;top:453px;width:100px;height:23px;background:#fff;border:1px solid #a5a5a5"></div>
<div class="t" style="left:1055.5px;top:458.59px;font-size:12.3px;">У</div>
<div class="t" style="left:772px;top:459.49px;font-size:12.3px;">Учебный отпуск</div>
<div class="a" style="left:1050px;top:481px;width:100px;height:23px;background:#fff;border:1px solid #a5a5a5"></div>
<div class="t" style="left:1055.5px;top:486.59px;font-size:12.3px;">Р</div>
<div class="t" style="left:772px;top:487.49px;font-size:12.3px;">Отпуск по беременности и родам</div>
<div class="a" style="left:1050px;top:509px;width:100px;height:23px;background:#fff;border:1px solid #a5a5a5"></div>
<div class="t" style="left:1055.5px;top:514.59px;font-size:12.3px;">ОЖ</div>
<div class="t" style="left:772px;top:515.49px;font-size:12.3px;">Отпуск по уходу за ребенком</div>
<div class="a" style="left:1050px;top:537px;width:100px;height:23px;background:#fff;border:1px solid #a5a5a5"></div>
<div class="t" style="left:1055.5px;top:542.59px;font-size:12.3px;">К</div>
<div class="t" style="left:772px;top:543.49px;font-size:12.3px;">Командировка</div>
<div class="a" style="left:1050px;top:565px;width:100px;height:23px;background:#fff;border:1px solid #a5a5a5"></div>
<div class="t" style="left:1055.5px;top:570.59px;font-size:12.3px;">П</div>
<div class="t" style="left:772px;top:571.49px;font-size:12.3px;">Прогул</div>
<div class="a" style="left:1054px;top:261px;width:1px;height:15px;background:#000"></div>
<div class="t" style="left:774.4px;top:597.59px;font-size:12.3px;">* Табель заполняется на основании Графика работы каждого</div>
<div class="t" style="left:774.4px;top:612.59px;font-size:12.3px;">сотрудника (кнопка Дополнительно в закладке Трудовая</div>
<div class="t" style="left:774.4px;top:627.59px;font-size:12.3px;">деятельность в карточке сотрудника)</div>
<div class="t" style="left:750.3px;top:651.06px;font-size:11.15px;font-weight:bold;">Выходные/не рабочие</div>
<div class="a" style="left:749px;top:664px;width:181px;height:26px;background:#80ffff;border:1px solid #7a7a7a"></div>
<div class="t" style="left:978.3px;top:655.60px;font-size:12.05px;">Кол-во сотрудников</div>
<div class="t" style="left:978.3px;top:670.40px;font-size:12.05px;">на лист при выводе</div>
<div class="t" style="left:978.3px;top:684.90px;font-size:12.05px;">табеля в Excel</div>
<div class="a" style="left:1098px;top:653px;width:72px;height:24px;background:#fff;border:1px solid #b0b0b0"></div>
<div class="t" style="left:764px;width:400px;text-align:right;top:658.89px;font-size:12.3px;">25</div>
<div class="a" style="left:751px;top:714px;width:118px;height:46px;background:#e1e1e1;border:1px solid #adadad;"></div>
<svg class="a" style="left:802px;top:723px" width="16" height="15" viewBox="0 0 16 15">
<rect x="0" y="0" width="16" height="15" fill="#c8c8c8"/>
<rect x="2" y="2" width="12" height="11" fill="#000"/>
<rect x="3" y="3" width="10" height="9" fill="#00ffff"/>
<path d="M4 4.5h3M4 6.5h3M4 8.5h3M4 10.5h3" stroke="#000" stroke-width="1"/>
<rect x="8" y="4" width="4" height="3" fill="#000"/><rect x="9" y="5" width="2" height="1" fill="#fff"/>
<rect x="8" y="8" width="4" height="3" fill="#000"/><rect x="9" y="9" width="2" height="1" fill="#fff"/>
</svg>
<div class="t" style="left:609.5px;width:400px;text-align:center;top:744.59px;font-size:12.3px;">Графики работы</div>
<div class="a" style="left:1087px;top:714px;width:83px;height:46px;background:#e1e1e1;border:1px solid #adadad;"></div>
<svg class="a" style="left:1120px;top:722px" width="16" height="16" shape-rendering="crispEdges"><rect x="0" y="0" width="16" height="16" fill="#c4c4c4"/><rect x="0" y="0" width="10" height="11" fill="#e4e4e4"/><rect x="1" y="1" width="8" height="1" fill="#000"/><rect x="1" y="1" width="1" height="11" fill="#000"/><rect x="8" y="1" width="1" height="11" fill="#000"/><rect x="0" y="11" width="12" height="1" fill="#000"/><rect x="2" y="2" width="6" height="9" fill="#fff"/><rect x="2" y="2" width="1" height="1" fill="#000"/><rect x="3" y="3" width="1" height="1" fill="#000"/><rect x="4" y="4" width="1" height="1" fill="#000"/><rect x="5" y="5" width="1" height="1" fill="#000"/><rect x="2" y="3" width="1" height="9" fill="#a8a800"/><rect x="3" y="4" width="1" height="9" fill="#a8a800"/><rect x="4" y="5" width="1" height="9" fill="#a8a800"/><rect x="5" y="5" width="1" height="11" fill="#000"/><rect x="2" y="12" width="1" height="1" fill="#000"/><rect x="3" y="13" width="1" height="1" fill="#000"/><rect x="4" y="14" width="1" height="1" fill="#000"/><rect x="2" y="3" width="1" height="1" fill="#a8a800"/><rect x="4" y="9" width="1" height="1" fill="#000"/><rect x="10" y="6" width="1" height="1" fill="#0000a8"/><rect x="11" y="5" width="1" height="3" fill="#0000a8"/><rect x="12" y="4" width="1" height="5" fill="#0000a8"/><rect x="13" y="3" width="1" height="7" fill="#0000a8"/><rect x="14" y="5" width="2" height="3" fill="#0000a8"/></svg>
<div class="t" style="left:928px;width:400px;text-align:center;top:744.84px;font-size:12px;color:#0000ff;">Выход</div>
</body></html>
